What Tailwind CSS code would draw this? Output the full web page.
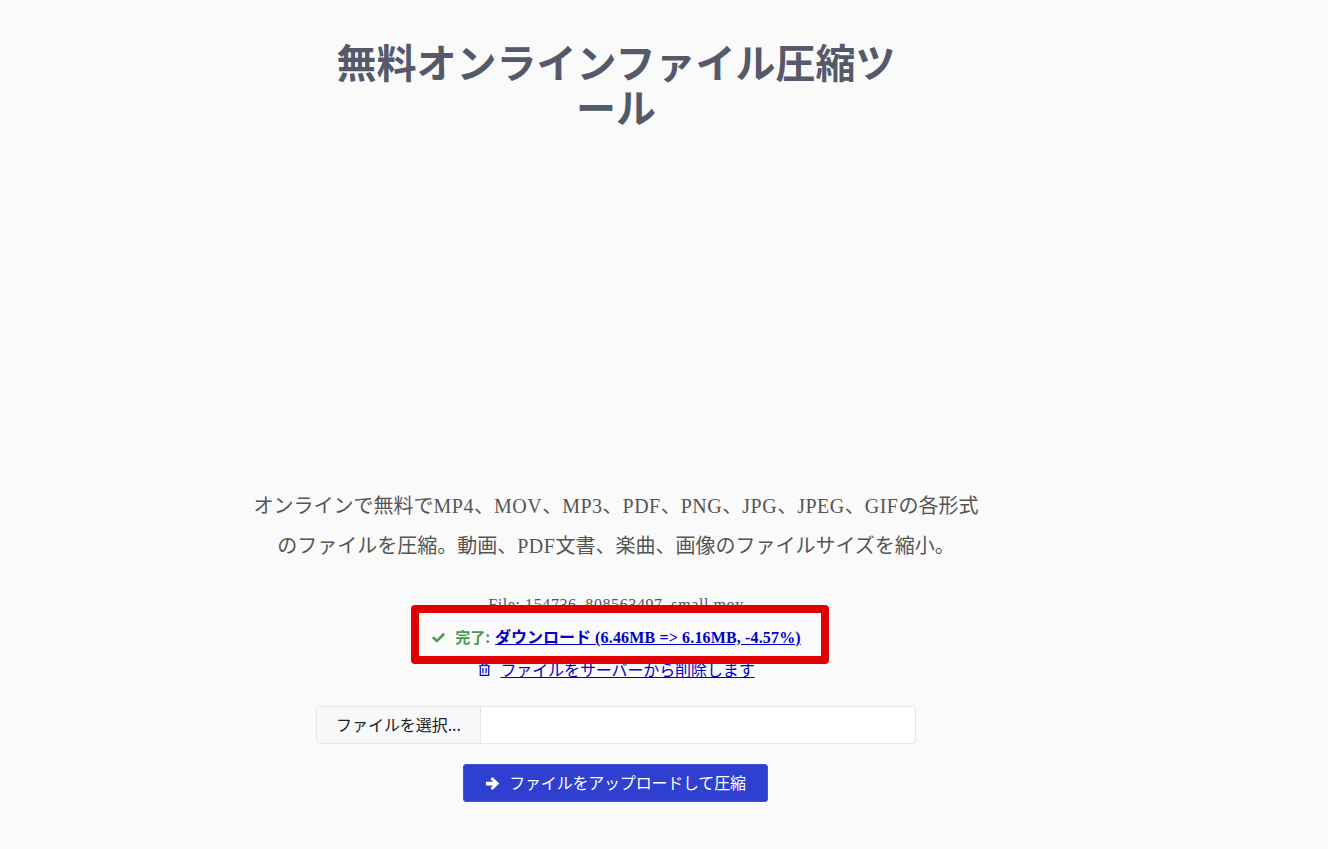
<!DOCTYPE html>
<html lang="ja">

<head>
    <meta charset="UTF-8">
    <meta name="viewport" content="width=device-width, initial-scale=1.0">
    <title>無料オンラインファイル圧縮ツール</title>
    <script src="https://cdn.jsdelivr.net/npm/@tailwindcss/browser@4"></script>
</head>

<body class="bg-[#fafafa] h-[849px] overflow-hidden font-['Liberation_Serif','Noto_Sans_CJK_JP',serif]">
    <main class="relative w-[800px] ml-[216px] text-center">
        <h1 class="w-[600px] mx-auto pt-[39px] h-[486px] text-[40px] leading-[45px] font-bold text-[#555a6b] font-['Noto_Sans_CJK_JP',sans-serif]">
            無料オンラインファイル圧縮ツ<br>ール
        </h1>
        <p class="w-[740px] mx-auto text-[20px] leading-[40px] text-[#555555]">
            オンラインで無料で<span class="tracking-[0.5px]">MP4</span>、<span class="tracking-[0.5px]">MOV</span>、<span class="tracking-[0.5px]">MP3</span>、<span class="tracking-[0.5px]">PDF</span>、<span class="tracking-[0.5px]">PNG</span>、<span class="tracking-[0.5px]">JPG</span>、<span class="tracking-[0.5px]">JPEG</span>、<span class="tracking-[0.5px]">GIF</span>の各形式のファイルを圧縮。動画、<span class="tracking-[0.5px]">PDF</span>文書、楽曲、画像のファイルサイズを縮小。
        </p>

        <div class="mt-[23px] text-[16px] leading-[32px] h-[97px]">
            <div class="text-[#555555] h-[32px] tracking-[0.6px]">File: 154736_808563497_small.mov</div>
            <div class="h-[32px] flex items-center justify-center font-bold">
                <svg class="w-[15px] h-[15px] mr-[9px] fill-[#4c9a4f]" viewBox="0 0 16 16">
                    <path d="M1 8.6 3 6.6 6.2 9.8 13 3 15 5 6.2 13.6z"></path>
                </svg>
                <span class="text-[#4c9a4f] mr-[5px] text-[15px] font-['Noto_Sans_CJK_JP',sans-serif]">完了:</span>
                <a href="#" class="text-[#0000cc] underline"><span class="font-['Noto_Sans_CJK_JP',sans-serif]">ダウンロード</span> <span class="tracking-[0.15px]">(6.46MB =&gt; 6.16MB, -4.57%)</span></a>
            </div>
            <div class="h-[32px] flex items-center justify-center">
                <svg class="w-[15px] h-[15px] mr-[8px] stroke-[#0000cc] fill-none" viewBox="0 0 16 16" stroke-width="1.3">
                    <path d="M2 4H14M5.5 4V2H10.5V4M3.5 4V14.3H12.5V4M6.3 6.5V12M9.7 6.5V12"></path>
                </svg>
                <a href="#" class="text-[#0000cc] underline font-['Noto_Sans_CJK_JP',sans-serif] tracking-[-0.1px]">ファイルをサーバーから削除します</a>
            </div>
        </div>

        <div class="w-[600px] h-[38px] mx-auto mt-[20px] flex bg-white border border-[#e4e6ea] rounded-[4px] overflow-hidden font-['Noto_Sans_CJK_JP',sans-serif]">
            <div class="w-[164px] pb-[2px] bg-[#f6f8fa] border-r border-[#e4e6ea] flex items-center justify-center text-[16px] tracking-[-0.05px] text-[#222222]">ファイルを選択...</div>
        </div>

        <button class="mt-[20px] mr-px pb-[2px] w-[305px] h-[38px] inline-flex items-center justify-center bg-[#2f3fd0] border border-[#4552d8] rounded-[3px] text-white text-[16px] tracking-[-0.2px] font-['Noto_Sans_CJK_JP',sans-serif]">
            <svg class="w-[15px] h-[15px] mt-[2px] mr-[9px] fill-white" viewBox="0 0 16 16">
                <path d="M8 1 15.2 8 8 15 5.8 12.8 8.4 10H1V6H8.4L5.8 3.2z"></path>
            </svg>
            ファイルをアップロードして圧縮
        </button>

        <!-- red highlight drawn over the result rows -->
        <div class="absolute left-[195px] top-[605px] w-[418px] h-[59px] border-[8px] border-[#e00000] rounded-[4px]"></div>
    </main>
</body>

</html>
